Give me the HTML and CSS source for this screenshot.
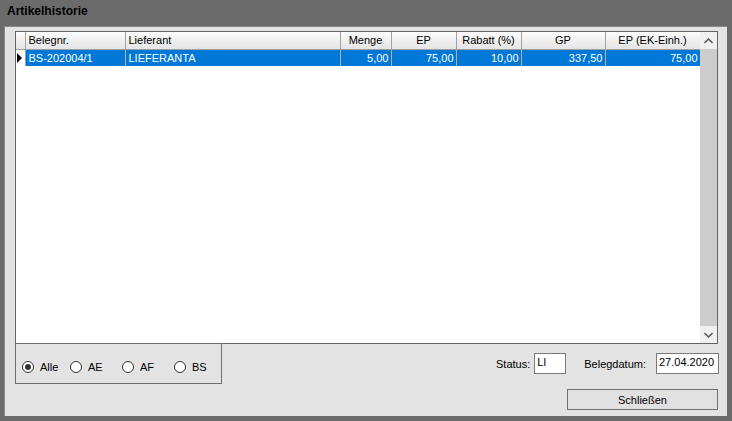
FILE: index.html
```html
<!DOCTYPE html>
<html lang="de">
<head>
<meta charset="utf-8">
<title>Artikelhistorie</title>
<link rel="stylesheet" href="styles.css">
</head>
<body>
<div class="window">
  <div class="titlebar">Artikelhistorie</div>
  <div class="panel">
    <div class="grid">
      <div class="grid-body">
        <table class="table">
          <colgroup>
            <col class="c-rh"><col class="c-beleg"><col class="c-lief"><col class="c-menge"><col class="c-ep"><col class="c-rabatt"><col class="c-gp"><col class="c-epek">
          </colgroup>
          <thead>
            <tr>
              <th class="rh"></th>
              <th class="left">Belegnr.</th>
              <th class="left">Lieferant</th>
              <th>Menge</th>
              <th>EP</th>
              <th>Rabatt (%)</th>
              <th>GP</th>
              <th>EP (EK-Einh.)</th>
            </tr>
          </thead>
          <tbody>
            <tr class="selected">
              <td class="rh"><span class="pointer"></span></td>
              <td class="left">BS-202004/1</td>
              <td class="left">LIEFERANTA</td>
              <td>5,00</td>
              <td>75,00</td>
              <td>10,00</td>
              <td>337,50</td>
              <td>75,00</td>
            </tr>
          </tbody>
        </table>
      </div>
      <div class="scrollbar">
        <div class="sb-btn">
          <svg width="9" height="6" viewBox="0 0 9 6"><path d="M0.5 5 L4.5 1 L8.5 5" fill="none" stroke="#606060" stroke-width="1.6"/></svg>
        </div>
        <div class="sb-track"></div>
        <div class="sb-btn">
          <svg width="9" height="6" viewBox="0 0 9 6"><path d="M0.5 1 L4.5 5 L8.5 1" fill="none" stroke="#606060" stroke-width="1.6"/></svg>
        </div>
      </div>
    </div>
    <div class="bottom">
      <div class="radiogroup">
        <label class="radio"><span class="dot checked"></span>Alle</label>
        <label class="radio"><span class="dot"></span>AE</label>
        <label class="radio"><span class="dot"></span>AF</label>
        <label class="radio"><span class="dot"></span>BS</label>
      </div>
      <div class="right">
        <div class="fields">
          <span class="lbl">Status:</span>
          <span class="input status">LI</span>
          <span class="lbl datelbl">Belegdatum:</span>
          <span class="input date">27.04.2020</span>
        </div>
        <div class="btnrow">
          <button class="button">Schließen</button>
        </div>
      </div>
    </div>
  </div>
</div>
</body>
</html>
```
FILE: styles.css
```css
* { box-sizing: border-box; }
html, body { margin: 0; padding: 0; }
body {
  width: 732px;
  height: 421px;
  background: #6b6b6b;
  font-family: "Liberation Sans", Arial, sans-serif;
  font-size: 11px;
  color: #000;
  overflow: hidden;
}
.window { display: flex; flex-direction: column; height: 421px; }
.titlebar {
  height: 26px;
  padding: 4px 0 0 7px;
  font-weight: bold;
  font-size: 12px;
  color: #000;
}
.panel {
  margin: 0 5px 5px 4px;
  height: 390px;
  background: #e3e3e3;
  border-left: 1px solid #8a8a8a;
  border-top: 1px solid #8a8a8a;
  padding: 4px 0 0 10px;
}
.grid {
  width: 703px;
  height: 313px;
  border: 1px solid #646464;
  background: #fff;
  display: flex;
}
.grid-body { width: 684px; overflow: hidden; }
.table {
  border-collapse: collapse;
  table-layout: fixed;
  width: 684px;
}
.c-rh { width: 9px; }
.c-beleg { width: 100px; }
.c-lief { width: 215px; }
.c-menge { width: 51px; }
.c-ep { width: 65px; }
.c-rabatt { width: 65px; }
.c-gp { width: 84px; }
.c-epek { width: 95px; }
th {
  height: 17px;
  padding: 0 2px;
  font-weight: normal;
  text-align: center;
  background: linear-gradient(#fdfdfd, #f1f1f1 45%, #e4e4e4);
  border-right: 1px solid #a0a0a0;
  border-bottom: 1px solid #a0a0a0;
  white-space: nowrap;
  overflow: hidden;
}
th.left { text-align: left; padding-left: 3px; }
td {
  height: 17px;
  padding: 0 2px 0 2px;
  text-align: right;
  border-right: 1px solid #b8ad9e;
  white-space: nowrap;
  overflow: hidden;
}
td.left { text-align: left; padding-left: 3px; }
tr.selected td { background: #0078d7; color: #fff; }
tr.selected td.rh { background: #fff; border-right: 1px solid #a0a0a0; padding: 0; }
th.rh { padding: 0; }
.pointer {
  display: block;
  width: 0;
  height: 0;
  margin-left: 1px;
  border-top: 5px solid transparent;
  border-bottom: 5px solid transparent;
  border-left: 5px solid #000;
}
.scrollbar {
  width: 17px;
  display: flex;
  flex-direction: column;
  background: #cdcdcd;
}
.sb-btn {
  height: 17px;
  background: #f0f0f0;
  display: flex;
  align-items: center;
  justify-content: center;
}
.sb-track { flex: 1; }
.bottom { display: flex; }
.radiogroup {
  width: 207px;
  height: 41px;
  margin-top: -1px;
  border: 1px solid #6e6e6e;
  display: flex;
  align-items: center;
  padding: 6px 0 0 6px;
}
.radio { display: flex; align-items: center; }
.radio:nth-child(1) { width: 48px; }
.radio:nth-child(2) { width: 52px; }
.radio:nth-child(3) { width: 52px; }
.dot {
  width: 12px;
  height: 12px;
  border: 1px solid #333;
  border-radius: 50%;
  background: #fff;
  margin-right: 6px;
  display: flex;
  align-items: center;
  justify-content: center;
}
.dot.checked::after {
  content: "";
  width: 6px;
  height: 6px;
  border-radius: 50%;
  background: #333;
}
.right { flex: 1; display: flex; flex-direction: column; align-items: flex-end; padding-right: 8px; }
.fields { display: flex; align-items: center; margin-top: 9px; height: 21px; }
.lbl { margin-right: 4px; color: #000; }
.datelbl { margin-left: 18px; margin-right: 10px; }
.input {
  height: 21px;
  background: #fff;
  border: 1px solid #7a7a7a;
  padding: 1px 0 0 2px;
  line-height: 14px;
  color: #000;
}
.status { width: 32px; }
.date { width: 63px; }
.btnrow { margin-top: 15px; margin-right: 1px; }
.button {
  width: 151px;
  height: 21px;
  background: #e1e1e1;
  border: 1px solid #707070;
  font-family: "Liberation Sans", Arial, sans-serif;
  font-size: 11px;
  color: #000;
  padding: 0;
}
```
